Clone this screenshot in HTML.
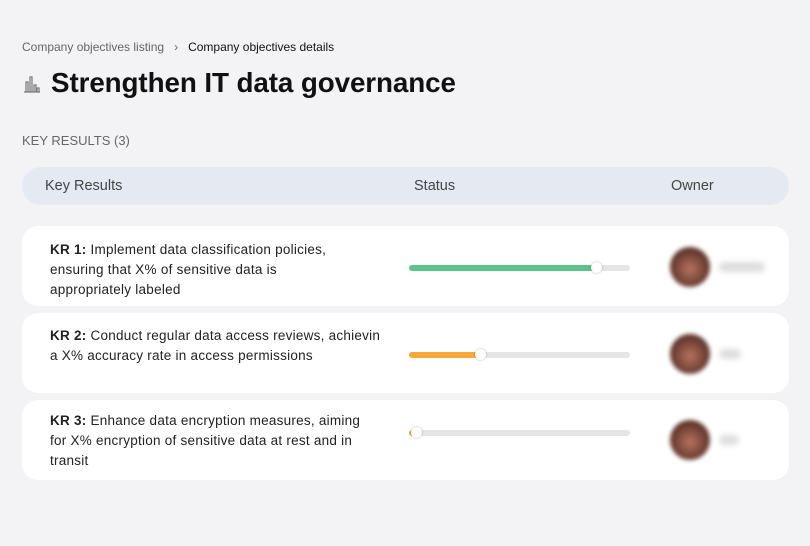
<!DOCTYPE html><html><head><style>
body{margin:0;width:810px;height:546px;background:#f3f3f5;font-family:"Liberation Sans",sans-serif;position:relative;overflow:hidden;color:#111}
.a{position:absolute}
.bc{left:22px;top:40px;font-size:12px;color:#666}
.bc b{font-weight:normal;color:#111}
h1{position:absolute;left:51px;top:67px;margin:0;font-size:27.8px;font-weight:bold;letter-spacing:-0.1px}
.kr{left:22px;top:133px;font-size:13px;color:#666}
.hd{left:22px;top:167px;width:767px;height:38px;background:#e5eaf2;border-radius:19px;font-size:14.5px;color:#444}
.hd span{position:absolute;top:11px}
.card{left:22px;width:767px;height:80px;background:#fff;border-radius:16px}
.t{position:absolute;left:28px;font-size:13.5px;letter-spacing:0.25px;line-height:20px;width:360px;white-space:nowrap;color:#222}
.bar{position:absolute;left:387px;top:39px;width:221px;height:6px;border-radius:3px;background:#e6e6e6}
.fill{position:absolute;left:0;top:0;height:6px;border-radius:3px}
.knob{position:absolute;top:-3px;width:11px;height:11px;border-radius:50%;background:#fff;box-shadow:0 0 2px rgba(0,0,0,.3);margin-left:-5px}
.av{position:absolute;left:648px;top:21px;width:40px;height:40px;border-radius:50%;background:radial-gradient(circle at 50% 55%,#b7735e,#5a3128 70%);filter:blur(2px)}
.nm{position:absolute;left:697px;top:36px;height:10px;background:#ddd;border-radius:5px;filter:blur(3px)}
</style></head><body>
<div class="a bc">Company objectives listing &nbsp;&nbsp;›&nbsp;&nbsp; <b>Company objectives details</b></div>
<svg class="a" style="left:22px;top:74px" width="20" height="20" viewBox="0 0 20 20" fill="none" stroke="#777" stroke-width="1.2"><path d="M2 18h16M4 18V8h2v10M8 18V3h2v15M12 18v-7h2v7M15 18v-4h2v4"/></svg>
<h1>Strengthen IT data governance</h1>
<div class="a kr">KEY RESULTS (3)</div>
<div class="a hd"><span style="left:23px">Key Results</span><span style="left:392px">Status</span><span style="left:649px">Owner</span></div>
<div class="a card" style="top:226px"><div class="t" style="top:14px"><b>KR 1:</b> Implement data classification policies,<br>ensuring that X% of sensitive data is<br>appropriately labeled</div><div class="bar"><div class="fill" style="width:187px;background:#5bc48d"></div><div class="knob" style="left:187px"></div></div><div class="av"></div><div class="nm" style="width:46px"></div></div>
<div class="a card" style="top:313px"><div class="t" style="top:13px"><b>KR 2:</b> Conduct regular data access reviews, achievin<br>a X% accuracy rate in access permissions</div><div class="bar"><div class="fill" style="width:71px;background:#f8a83a"></div><div class="knob" style="left:71px"></div></div><div class="av"></div><div class="nm" style="width:22px"></div></div>
<div class="a card" style="top:400px"><div class="t" style="top:11px"><b>KR 3:</b> Enhance data encryption measures, aiming<br>for X% encryption of sensitive data at rest and in<br>transit</div><div class="bar" style="top:30px"><div class="fill" style="width:6px;background:#f8a83a"></div><div class="knob" style="left:7px"></div></div><div class="av" style="top:20px"></div><div class="nm" style="width:20px;top:35px"></div></div>
</body></html>
